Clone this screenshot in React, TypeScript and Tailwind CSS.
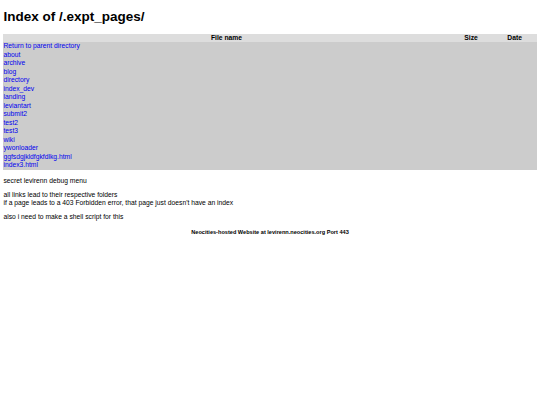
const entries = [
  "Return to parent directory",
  "about",
  "archive",
  "blog",
  "directory",
  "index_dev",
  "landing",
  "leviantart",
  "submit2",
  "test2",
  "test3",
  "wiki",
  "ywonloader",
  "ggfsdgjkldfgkfdlkg.html",
  "index3.html",
];

export default function App() {
  return (
    <div className="min-h-[405px] bg-white px-[3.4px] font-['Liberation_Sans',Arial,sans-serif] text-[6.75px] leading-[7.76px] text-black">
      <h1 className="pt-[9px] pb-[9px] text-[13.5px] leading-[15.5px] font-bold">
        Index of /.expt_pages/
      </h1>

      <table className="w-full border-collapse">
        <thead>
          <tr className="h-[8.5px] bg-[#dddddd]">
            <th className="p-0 text-center font-bold">File name</th>
            <th className="w-[43px] p-0 text-center font-bold">Size</th>
            <th className="w-[44px] p-0 text-center font-bold">Date</th>
          </tr>
        </thead>
        <tbody>
          {entries.map((name) => (
            <tr key={name} className="h-[8.5px] bg-[#cccccc]">
              <td className="p-0">
                <a href="#" className="text-[#0000ee]">
                  {name}
                </a>
              </td>
              <td className="p-0"></td>
              <td className="p-0"></td>
            </tr>
          ))}
        </tbody>
      </table>

      <p className="mt-[7px]">secret levirenn debug menu</p>
      <p className="mt-[6.75px]">
        all links lead to their respective folders
        <br />
        if a page leads to a 403 Forbidden error, that page just doesn't have an index
      </p>
      <p className="mt-[6.75px]">also i need to make a shell script for this</p>

      <p className="mt-[8px] text-center text-[5.6px] leading-[6.5px] font-bold">
        Neocities-hosted Website at levirenn.neocities.org Port 443
      </p>
    </div>
  );
}
